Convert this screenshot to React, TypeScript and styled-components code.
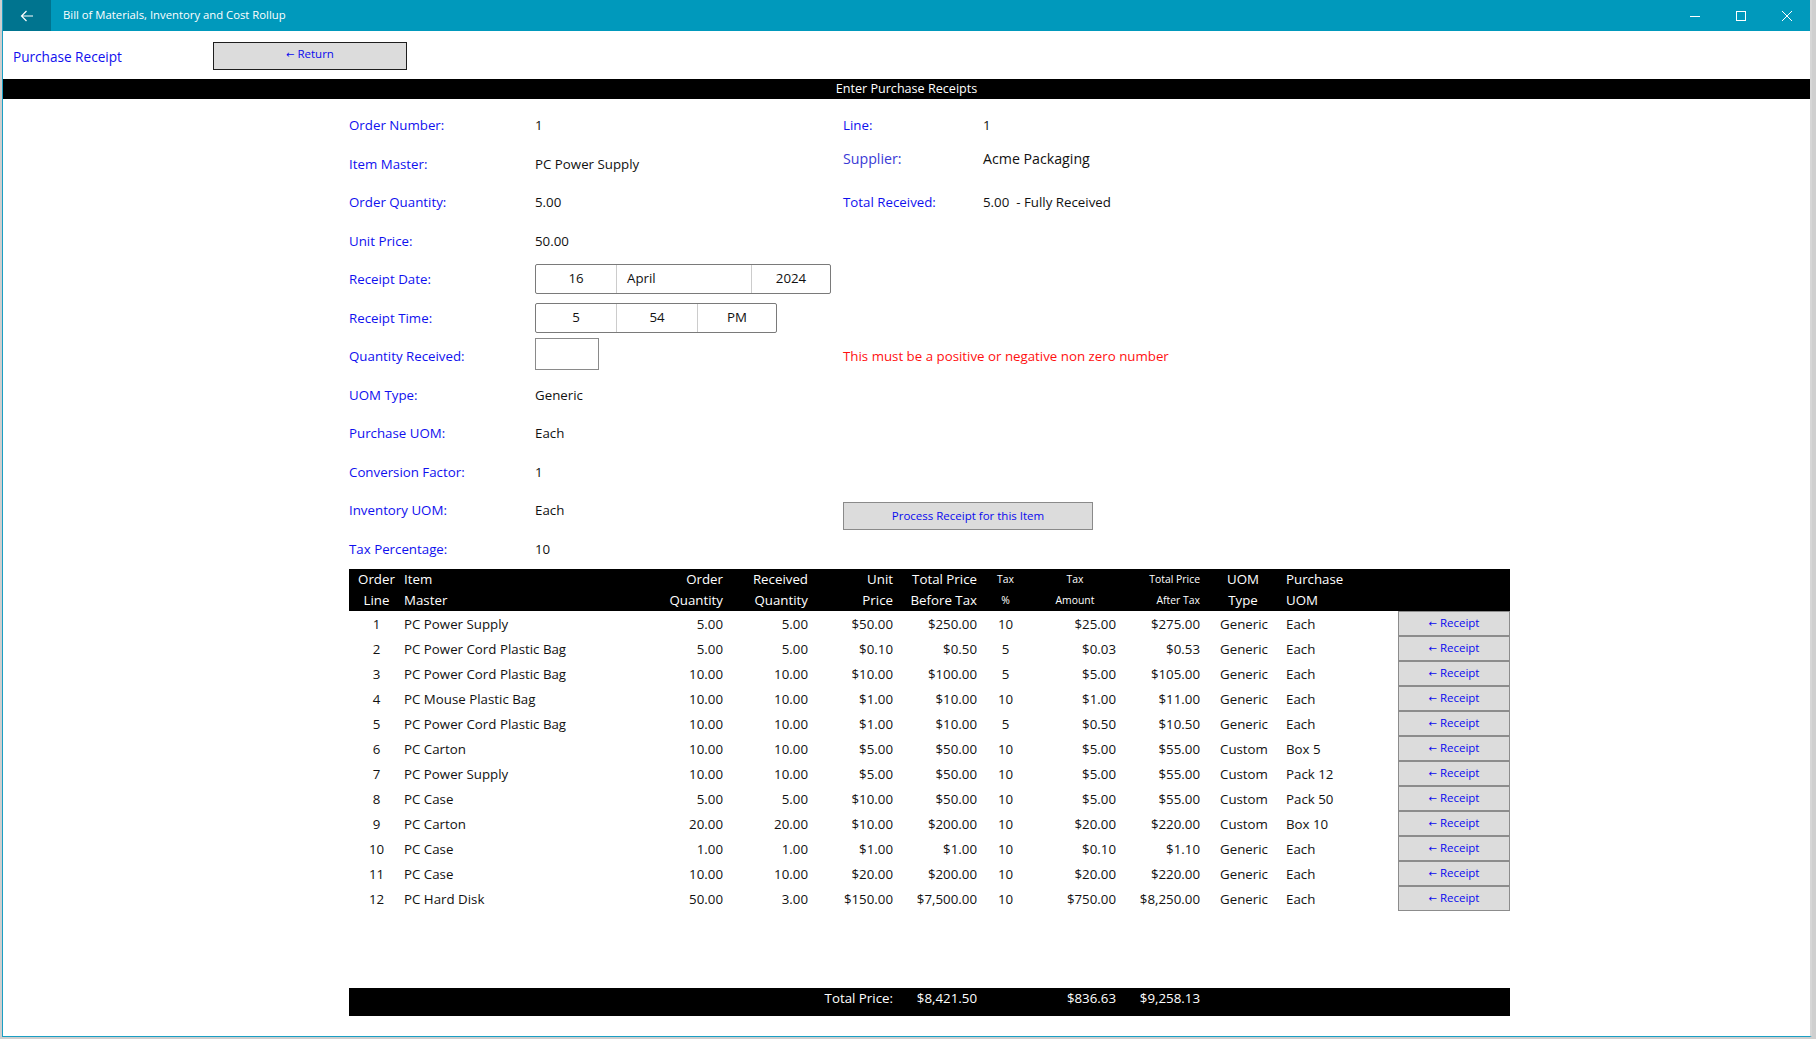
import React from 'react';
import styled, { createGlobalStyle } from 'styled-components';

const GlobalStyle = createGlobalStyle`
  * {
    box-sizing: border-box;
  }

  html,
  body {
    margin: 0;
    padding: 0;
    background: #cfcfcf;
    overflow: hidden;
  }

  body {
    font-family: 'Segoe UI', 'Open Sans', 'Noto Sans', sans-serif;
    font-size: 13.3px;
    color: #111111;
  }
`;

type Align = 'left' | 'center' | 'right';

type Column = {
  head: string;
  align: Align;
  headAlign?: Align;
  small?: boolean;
  inset?: number;
};

// order line, item, qty x2, prices, tax, uom
const columns: Column[] = [
  { head: 'Order\nLine', align: 'center' },
  { head: 'Item\nMaster', align: 'left' },
  { head: 'Order\nQuantity', align: 'right' },
  { head: 'Received\nQuantity', align: 'right' },
  { head: 'Unit\nPrice', align: 'right' },
  { head: 'Total Price\nBefore Tax', align: 'right' },
  { head: 'Tax\n%', align: 'center', small: true },
  { head: 'Tax\nAmount', align: 'right', headAlign: 'center', small: true },
  { head: 'Total Price\nAfter Tax', align: 'right', small: true },
  { head: 'UOM\nType', align: 'left', headAlign: 'center', inset: 20 },
  { head: 'Purchase\nUOM', align: 'left' },
];

const gridColumns = '55px 236px 83px 85px 85px 84px 57px 82px 84px 86px 112px 112px';

const orderLines: string[][] = [
  ['1', 'PC Power Supply', '5.00', '5.00', '$50.00', '$250.00', '10', '$25.00', '$275.00', 'Generic', 'Each'],
  ['2', 'PC Power Cord Plastic Bag', '5.00', '5.00', '$0.10', '$0.50', '5', '$0.03', '$0.53', 'Generic', 'Each'],
  ['3', 'PC Power Cord Plastic Bag', '10.00', '10.00', '$10.00', '$100.00', '5', '$5.00', '$105.00', 'Generic', 'Each'],
  ['4', 'PC Mouse Plastic Bag', '10.00', '10.00', '$1.00', '$10.00', '10', '$1.00', '$11.00', 'Generic', 'Each'],
  ['5', 'PC Power Cord Plastic Bag', '10.00', '10.00', '$1.00', '$10.00', '5', '$0.50', '$10.50', 'Generic', 'Each'],
  ['6', 'PC Carton', '10.00', '10.00', '$5.00', '$50.00', '10', '$5.00', '$55.00', 'Custom', 'Box 5'],
  ['7', 'PC Power Supply', '10.00', '10.00', '$5.00', '$50.00', '10', '$5.00', '$55.00', 'Custom', 'Pack 12'],
  ['8', 'PC Case', '5.00', '5.00', '$10.00', '$50.00', '10', '$5.00', '$55.00', 'Custom', 'Pack 50'],
  ['9', 'PC Carton', '20.00', '20.00', '$10.00', '$200.00', '10', '$20.00', '$220.00', 'Custom', 'Box 10'],
  ['10', 'PC Case', '1.00', '1.00', '$1.00', '$1.00', '10', '$0.10', '$1.10', 'Generic', 'Each'],
  ['11', 'PC Case', '10.00', '10.00', '$20.00', '$200.00', '10', '$20.00', '$220.00', 'Generic', 'Each'],
  ['12', 'PC Hard Disk', '50.00', '3.00', '$150.00', '$7,500.00', '10', '$750.00', '$8,250.00', 'Generic', 'Each'],
];

const App = () => {
  return (
    <>
      <GlobalStyle />
      <Desktop>
        <Window>
          <TitleBar>
            <BackButton>
              <svg width="14" height="12" viewBox="0 0 14 12">
                <path d="M13 6H1.5M6.5 1 1.5 6l5 5" fill="none" stroke="#fff" strokeWidth="1.2" />
              </svg>
            </BackButton>
            <AppTitle>Bill of Materials, Inventory and Cost Rollup</AppTitle>
            <CaptionButton>
              <svg width="10" height="10" viewBox="0 0 10 10">
                <path d="M0 5.5h10" stroke="#fff" strokeWidth="1" />
              </svg>
            </CaptionButton>
            <CaptionButton>
              <svg width="10" height="10" viewBox="0 0 10 10">
                <rect x="0.5" y="0.5" width="9" height="9" fill="none" stroke="#fff" strokeWidth="1" />
              </svg>
            </CaptionButton>
            <CaptionButton>
              <svg width="10" height="10" viewBox="0 0 10 10">
                <path d="M0 0l10 10M10 0 0 10" stroke="#fff" strokeWidth="1" />
              </svg>
            </CaptionButton>
          </TitleBar>

          <TopRow>
            <PageTitle>Purchase Receipt</PageTitle>
            <ReturnButton>
              <Arrow>←</Arrow> Return
            </ReturnButton>
          </TopRow>

          <Banner>Enter Purchase Receipts</Banner>

          <Sheet>
            <Form>
              <Label $row={1}>Order Number:</Label>
              <Value $row={1}>1</Value>
              <Label $row={2}>Item Master:</Label>
              <Value $row={2}>PC Power Supply</Value>
              <Label $row={3}>Order Quantity:</Label>
              <Value $row={3}>5.00</Value>
              <Label $row={4}>Unit Price:</Label>
              <Value $row={4}>50.00</Value>
              <Label $row={5}>Receipt Date:</Label>
              <Value $row={5}>
                <Picker>
                  <Segment $width={80}>16</Segment>
                  <Segment $width={135} $align="left">
                    April
                  </Segment>
                  <Segment $width={79}>2024</Segment>
                </Picker>
              </Value>
              <Label $row={6}>Receipt Time:</Label>
              <Value $row={6}>
                <Picker>
                  <Segment $width={80}>5</Segment>
                  <Segment $width={81}>54</Segment>
                  <Segment $width={79}>PM</Segment>
                </Picker>
              </Value>
              <Label $row={7}>Quantity Received:</Label>
              <Value $row={7}>
                <QuantityInput />
              </Value>
              <Label $row={8}>UOM Type:</Label>
              <Value $row={8}>Generic</Value>
              <Label $row={9}>Purchase UOM:</Label>
              <Value $row={9}>Each</Value>
              <Label $row={10}>Conversion Factor:</Label>
              <Value $row={10}>1</Value>
              <Label $row={11}>Inventory UOM:</Label>
              <Value $row={11}>Each</Value>
              <Label $row={12}>Tax Percentage:</Label>
              <Value $row={12}>10</Value>

              <Label $row={1} $right>
                Line:
              </Label>
              <Value $row={1} $right>
                1
              </Value>
              <Label $row={2} $right $large>
                Supplier:
              </Label>
              <Value $row={2} $right $large>
                Acme Packaging
              </Value>
              <Label $row={3} $right>
                Total Received:
              </Label>
              <Value $row={3} $right>
                5.00&nbsp;&nbsp;- Fully Received
              </Value>
              <ErrorText>This must be a positive or negative non zero number</ErrorText>
              <ProcessButton>Process Receipt for this Item</ProcessButton>
            </Form>

            <HeaderRow>
              {columns.map((col, i) => (
                <HeadCell key={i} $align={col.headAlign ?? col.align} $small={col.small}>
                  {col.head}
                </HeadCell>
              ))}
              <HeadCell $align="left" />
            </HeaderRow>

            <Rows>
              {orderLines.map((row) => (
                <Row key={row[0]}>
                  {row.map((value, i) => (
                    <Cell key={i} $align={columns[i].align} $inset={columns[i].inset}>
                      {value}
                    </Cell>
                  ))}
                  <ReceiptButton>
                    <Arrow>←</Arrow> Receipt
                  </ReceiptButton>
                </Row>
              ))}
            </Rows>

            <Totals>
              <TotalCell $col={5}>Total Price:</TotalCell>
              <TotalCell $col={6}>$8,421.50</TotalCell>
              <TotalCell $col={8}>$836.63</TotalCell>
              <TotalCell $col={9}>$9,258.13</TotalCell>
            </Totals>
          </Sheet>
        </Window>
      </Desktop>
    </>
  );
};

const Desktop = styled.div`
  width: 1816px;
  height: 1039px;
  padding-left: 2px;
  background: #cfcfcf;
  display: flex;
  align-items: flex-start;
`;

const Window = styled.div`
  width: 1810px;
  height: 1037px;
  background: #ffffff;
  border-left: 1px solid #1a9fc4;
  border-right: 2px solid #d6d6d6;
  border-bottom: 1px solid #1a9fc4;

  display: flex;
  flex-direction: column;
`;

const TitleBar = styled.header`
  height: 31px;
  flex-shrink: 0;
  background: #0099bc;

  display: flex;
  align-items: stretch;
`;

const BackButton = styled.div`
  width: 48px;
  background: #00748f;

  display: flex;
  align-items: center;
  justify-content: center;
`;

const AppTitle = styled.h1`
  flex: 1;
  margin: 0 0 2px;
  padding-left: 12px;
  align-self: center;

  color: #ffffff;
  font-size: 11.3px;
  font-weight: 400;
`;

const CaptionButton = styled.div`
  width: 46px;

  display: flex;
  align-items: center;
  justify-content: center;
`;

const TopRow = styled.div`
  height: 48px;
  padding: 11px 0 9px 10px;

  display: grid;
  grid-template-columns: 200px 194px;
  align-items: center;
`;

const PageTitle = styled.h2`
  margin: 0;
  padding-top: 1px;
  color: #1010ee;
  font-size: 13.6px;
  font-weight: 400;
`;

const GreyButton = styled.div`
  background: #dcdcdc;
  color: #0a0aee;
  font-size: 11.5px;
  text-align: center;
`;

const Arrow = styled.span`
  font-family: 'DejaVu Sans', sans-serif;
  font-size: 10px;
`;

const ReturnButton = styled(GreyButton)`
  height: 28px;
  line-height: 22px;
  border: 1px solid #1e1e1e;
`;

const Banner = styled.div`
  height: 20px;
  background: #000000;
  color: #ffffff;

  font-size: 12.6px;
  line-height: 20px;
  text-align: center;
`;

const Sheet = styled.section`
  width: 1161px;
  margin-left: 346px;

  display: flex;
  flex-direction: column;
`;

const Form = styled.div`
  padding-top: 6.7px;

  display: grid;
  grid-template-columns: 186px 308px 140px 1fr;
  grid-template-rows: repeat(12, 38.55px);
  align-items: center;
`;

type FieldProps = {
  $row: number;
  $right?: boolean;
  $large?: boolean;
};

const Label = styled.div<FieldProps>`
  grid-row: ${(p) => p.$row};
  grid-column: ${(p) => (p.$right ? 3 : 1)};
  align-self: ${(p) => (p.$large ? 'start' : 'center')};
  padding-top: ${(p) => (p.$large ? '5px' : '0')};

  color: ${(p) => (p.$large ? '#3a3ad6' : '#1010ee')};
  font-size: ${(p) => (p.$large ? '14.2px' : '13.3px')};
`;

const Value = styled.div<FieldProps>`
  grid-row: ${(p) => p.$row};
  grid-column: ${(p) => (p.$right ? 4 : 2)};
  align-self: ${(p) => (p.$large ? 'start' : 'center')};
  padding-top: ${(p) => (p.$large ? '5px' : '0')};

  color: #111111;
  font-size: ${(p) => (p.$large ? '14.2px' : '13.3px')};
`;

const Picker = styled.div`
  height: 30px;
  display: inline-flex;
  border: 1px solid #7a7a7a;
  border-radius: 2px;
`;

const Segment = styled.div<{ $width: number; $align?: Align }>`
  width: ${(p) => p.$width}px;
  padding-left: ${(p) => (p.$align === 'left' ? '10px' : '0')};
  border-left: 1px solid #cccccc;

  line-height: 26px;
  text-align: ${(p) => p.$align ?? 'center'};

  &:first-child {
    border-left: none;
  }
`;

const QuantityInput = styled.div`
  width: 64px;
  height: 32px;
  margin-top: -4px;
  border: 1px solid #8a8a8a;
`;

const ErrorText = styled.div`
  grid-row: 7;
  grid-column: 3 / 5;
  color: #ff1010;
`;

const ProcessButton = styled(GreyButton)`
  grid-row: 11;
  grid-column: 3 / 5;
  align-self: end;

  width: 250px;
  height: 28px;
  line-height: 25px;
  border: 1px solid #8a8a8a;
`;

const TableGrid = styled.div`
  display: grid;
  grid-template-columns: ${gridColumns};
`;

const HeaderRow = styled(TableGrid)`
  height: 42px;
  margin-top: 1px;
  background: #000000;
  color: #ffffff;
`;

const HeadCell = styled.div<{ $align: Align; $small?: boolean }>`
  white-space: pre-line;
  text-align: ${(p) => p.$align};
  font-size: ${(p) => (p.$small ? '10.4px' : '13.3px')};
  line-height: 21px;
`;

const Rows = styled.div`
  display: flex;
  flex-direction: column;
`;

const Row = styled(TableGrid)`
  height: 25px;
  align-items: center;
`;

const Cell = styled.div<{ $align: Align; $inset?: number }>`
  padding-left: ${(p) => p.$inset ?? 0}px;
  text-align: ${(p) => p.$align};
  white-space: nowrap;
`;

const ReceiptButton = styled(GreyButton)`
  height: 25px;
  line-height: 22px;
  border: 1px solid #8c8c8c;
`;

const Totals = styled(TableGrid)`
  height: 28px;
  margin-top: 77px;
  background: #000000;
  color: #ffffff;
`;

const TotalCell = styled.div<{ $col: number }>`
  grid-column: ${(p) => p.$col};
  text-align: right;
  line-height: 20px;
`;

export default App;
